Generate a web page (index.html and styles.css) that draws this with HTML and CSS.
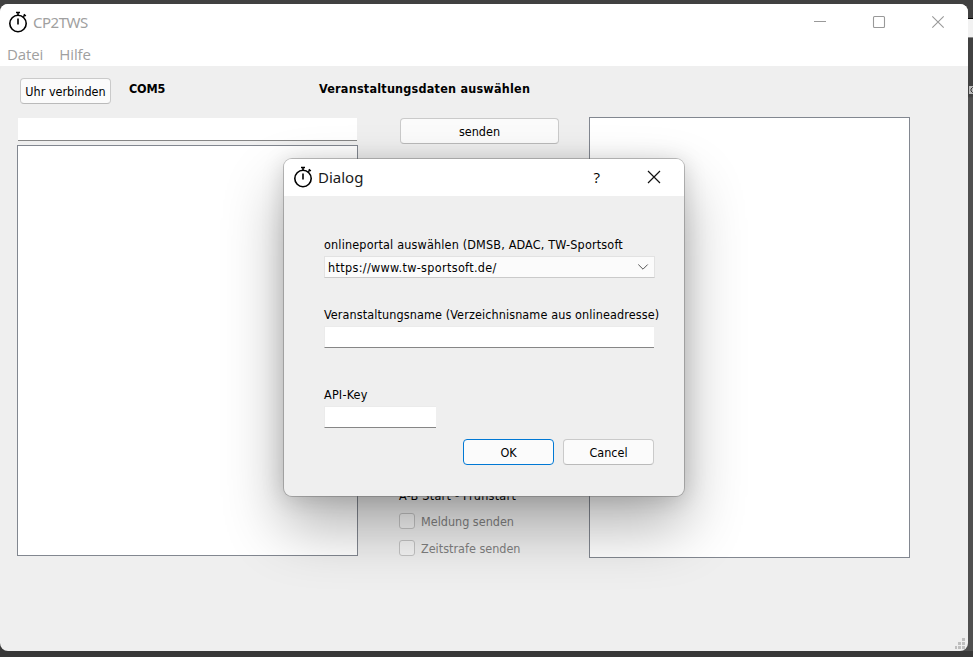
FILE: index.html
```html
<!DOCTYPE html>
<html lang="de">
<head>
<meta charset="utf-8">
<title>CP2TWS</title>
<link rel="stylesheet" href="styles.css">
</head>
<body>
<div class="desktop">
  <div class="behind"><span class="behind-title"></span><svg class="behind-mark" width="6" height="8" viewBox="0 0 6 8"><path d="M6 1.500H3.500L2 3v2l1.500 1.500H6M6 4H4"/></svg></div>
  <main class="window">
    <header class="titlebar">
      <svg class="watch" viewBox="0 0 20 22" width="20" height="22"><circle cx="10" cy="12.5" r="8.2"/><path d="M8 1.5h4M10 2v3M10 7.500v6M15.2 5.700l1.500-1.500M15.800 3.300l2 1.700"/></svg>
      <h1 class="app-name">CP2TWS</h1>
      <div class="controls">
        <svg width="14" height="14" viewBox="0 0 14 14"><path d="M1 6.5h12"/></svg>
        <svg width="14" height="14" viewBox="0 0 14 14"><rect x="1.5" y="1.5" width="11" height="11" rx="1"/></svg>
        <svg width="14" height="14" viewBox="0 0 14 14"><path d="M1.3 1.3l11.4 11.4M12.7 1.3L1.3 12.7"/></svg>
      </div>
    </header>
    <nav class="menu"><span class="m-datei">Datei</span><span class="m-hilfe">Hilfe</span></nav>
    <div class="topline">
      <button class="btn connect">Uhr verbinden</button>
      <b class="port">COM5</b>
      <b class="event">Veranstaltungsdaten auswählen</b>
    </div>
    <div class="columns">
      <section class="left"><div class="edit"></div><div class="log"></div></section>
      <section class="middle">
        <button class="btn send">senden</button>
        <div class="options">
          <span class="group">A-B Start - Frühstart</span>
          <label class="check"><i></i><span class="t-meldung">Meldung senden</span></label>
          <label class="check"><i></i><span class="t-zeit">Zeitstrafe senden</span></label>
        </div>
      </section>
      <section class="right"></section>
    </div>
    <svg class="grip" width="10" height="11" viewBox="0 0 10 11"><path d="M7 0h3v3h-3zM3 4h3v3h-3zM7 4h3v3h-3zM0 8h2v3h-2zM3 8h3v3h-3zM7 8h3v3h-3z"/></svg>
  </main>
  <div class="dialog" role="dialog">
    <header class="dialog-title">
      <svg class="watch" viewBox="0 0 20 22" width="20" height="22"><circle cx="10" cy="12.5" r="8.2"/><path d="M8 1.5h4M10 2v3M10 7.500v6M15.2 5.700l1.500-1.500M15.800 3.300l2 1.700"/></svg>
      <h2 class="dialog-name">Dialog</h2>
      <span class="help">?</span>
      <svg class="close" width="14" height="14" viewBox="0 0 14 14"><path d="M1 1l12 12M13 1L1 13"/></svg>
    </header>
    <div class="form">
      <span class="label l-portal">onlineportal auswählen (DMSB, ADAC, TW-Sportsoft</span>
      <div class="combo"><span class="url">https://www.tw-sportsoft.de/</span><svg width="12" height="8" viewBox="0 0 12 8"><path d="M1.300 1.500L6 6.200l4.700-4.700"/></svg></div>
      <span class="label l-name">Veranstaltungsname (Verzeichnisname aus onlineadresse)</span>
      <div class="field"></div>
      <span class="label l-key">API-Key</span>
      <div class="field short"></div>
      <div class="actions"><button class="btn ok">OK</button><button class="btn cancel">Cancel</button></div>
    </div>
  </div>
</div>
</body>
</html>
```
FILE: styles.css
```css
* { box-sizing: border-box; }
body { margin: 0; font: 12.5px/16px "DejaVu Sans Condensed", "DejaVu Sans", sans-serif; font-stretch: condensed; color: #000; }
span, b, h1, h2, button { white-space: nowrap; }
.desktop { position: relative; width: 973px; height: 657px; padding-top: 4px; overflow: hidden; background: linear-gradient(#414141, #4d4d4d 50%, #383838 99%); }
.behind { position: absolute; right: 0; top: 0; width: 12px; height: 651px; background: linear-gradient(#414141, #414141 96px, #505050 98px, #505050); }
.behind-title { display: block; height: 20px; margin-top: 18px; background: #f2f2f2; border-top: 1px solid #000; border-bottom: 1px solid #888; }
.behind-mark { display: block; margin: 48px 0 0 8px; background: #bbb; fill: none; stroke: #333; }
.window { position: relative; width: 968px; height: 647px; background: #efefef; border-radius: 8px; overflow: hidden; }
.titlebar { display: flex; height: 36px; background: #fff; padding: 7px 23px 0 8px; }
.watch { flex: none; fill: none; stroke: #000; stroke-width: 1.6; }
.app-name, .dialog-name { margin: 0 0 0 5px; font: 15px/23px "Noto Sans", sans-serif; }
.dialog-name { color: #1a1a1a; }
.app-name { color: #a0a0a0; letter-spacing: -.5px; }
.controls { display: flex; gap: 45px; margin: 4px 0 0 auto; }
.controls svg { fill: none; stroke: #999; stroke-width: 1.1; }
.menu { display: flex; gap: 16px; height: 26px; padding: 3px 0 0 7px; background: #fff; color: #a0a0a0; font: 15px/22px "Open Sans", sans-serif; letter-spacing: -.1px; }
.topline { display: flex; height: 51px; padding: 12px 0 0 20px; }
.btn { height: 26px; padding: 1px 0 0; background: #fbfbfb; border: 1px solid #cacaca; border-bottom-color: #bababa; border-radius: 4px; font: inherit; color: #000; text-align: center; }
.connect { width: 91px; }
.port { margin-left: 18px; line-height: 22px; width: 190px; letter-spacing: -.2px; }
.event { line-height: 22px; letter-spacing: .22px; }
.columns { display: flex; padding-left: 17px; }
.left { width: 341px; padding-top: 1px; }
.edit { height: 23px; margin: 0 1px 4px; background: #fff; border-bottom: 1px solid #868686; }
.log { height: 411px; background: #fff; border: 1px solid #828790; }
.middle { display: flex; flex-direction: column; justify-content: space-between; width: 160px; height: 441px; margin: 0 30px 0 41px; padding: 1px 0 1px; }
.send { width: 159px; margin-left: 1px; }
.options { display: flex; flex-direction: column; height: 69px; }
.group { height: 16px; margin-bottom: 9px; letter-spacing: .26px; }
.check { display: flex; align-items: center; height: 16px; margin-bottom: 11px; color: #808080; }
.check i { width: 16px; height: 16px; margin-right: 6px; background: #f5f5f5; border: 1px solid #c4c4c4; border-radius: 3px; }
.check span { padding-top: 1px; }
.right { width: 321px; height: 441px; background: #fff; border: 1px solid #828790; }
.grip { position: absolute; right: 3px; bottom: 2px; fill: #bfbfbf; }
.dialog { position: absolute; left: 283px; top: 158px; width: 402px; height: 339px; background: #efefef; background-clip: padding-box; border: 1px solid rgba(100,100,100,.4); border-radius: 9px; overflow: hidden; box-shadow: 0 30px 60px rgba(0,0,0,.3), 0 2px 22px rgba(0,0,0,.15); }
.dialog-title { display: flex; height: 37px; padding: 7px 23px 0 9px; background: #fff; }
.help { margin: 0 47px 0 auto; font: 15px/22px "Open Sans", sans-serif; }
.close { margin-top: 4px; fill: none; stroke: #111; stroke-width: 1.2; }
.form { display: flex; flex-direction: column; padding: 41px 24px 0 40px; }
.label { height: 16px; }
.l-portal { letter-spacing: .17px; }
.l-name { letter-spacing: .11px; }
.l-key { letter-spacing: .2px; }
.url { padding-top: 2px; letter-spacing: .34px; }
.combo { display: flex; align-items: center; justify-content: space-between; width: 331px; height: 22px; margin: 3px 0 29px; padding: 0 5px 0 3px; background: #fbfbfb; border: 1px solid #e2e2e2; border-bottom-color: #cacaca; }
.combo svg { fill: none; stroke: #555; stroke-width: 1; }
.field { width: 330px; height: 22px; margin: 3px 0 39px; background: #fff; border-bottom: 1px solid #868686; border-top: 1px solid #ebebeb; border-left: 1px solid #ebebeb; }
.short { width: 112px; margin-bottom: 11px; }
.actions { display: flex; gap: 9px; margin-left: 139px; }
.ok, .cancel { width: 91px; }
.ok { border-color: #0078d4; }
```
